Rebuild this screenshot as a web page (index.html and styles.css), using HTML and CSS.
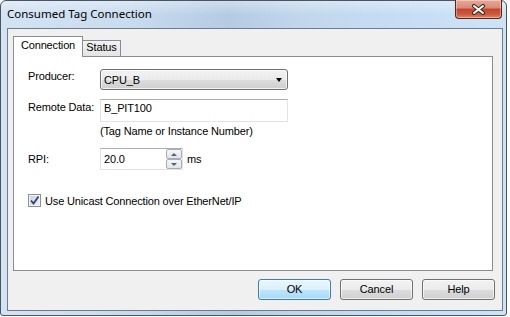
FILE: index.html
```html
<!DOCTYPE html>
<html lang="en">
<head>
    <meta charset="UTF-8">
    <title>Consumed Tag Connection</title>
    <link rel="stylesheet" href="styles.css">
</head>
<body>
    <div class="window">
        <div class="titlebar">
            <span class="title">Consumed Tag Connection</span>
            <div class="close">
                <svg width="15" height="11" viewBox="0 0 15 11">
                    <path d="M3 2 L12 9 M12 2 L3 9" stroke="#3a2420" stroke-width="4" stroke-linecap="round"/>
                    <path d="M3 2 L12 9 M12 2 L3 9" stroke="#ffffff" stroke-width="2" stroke-linecap="round"/>
                </svg>
            </div>
        </div>

        <div class="client">
            <div class="tabs">
                <div class="tab active">Connection</div>
                <div class="tab">Status</div>
            </div>

            <div class="panel">
                <div class="row">
                    <span class="label top">Producer:</span>
                    <div class="combo">
                        <span>CPU_B</span>
                        <span class="arrow"></span>
                    </div>
                </div>

                <div class="row remote">
                    <span class="label top2">Remote Data:</span>
                    <div class="field">B_PIT100</div>
                </div>

                <div class="hint">(Tag Name or Instance Number)</div>

                <div class="row rpi">
                    <span class="label">RPI:</span>
                    <div class="spin">
                        <span class="spin-text">20.0</span>
                        <div class="spin-btns">
                            <span class="spin-btn"><span class="up"></span></span>
                            <span class="spin-btn"><span class="down"></span></span>
                        </div>
                    </div>
                    <span class="unit">ms</span>
                </div>

                <div class="check-row">
                    <span class="checkbox">
                        <svg width="11" height="11" viewBox="0 0 11 11">
                            <path d="M2 5.5 L4.5 8.5 L9.5 1.5" fill="none" stroke="#2e4374" stroke-width="1.8"/>
                        </svg>
                    </span>
                    <span>Use Unicast Connection over EtherNet/IP</span>
                </div>
            </div>

            <div class="buttons">
                <div class="btn default">OK</div>
                <div class="btn">Cancel</div>
                <div class="btn">Help</div>
            </div>
        </div>
    </div>
</body>
</html>
```

FILE: styles.css
```css
* {
    box-sizing: border-box;
}

body {
    margin: 0;
    background: #ffffff;
    font-family: "Liberation Sans", Arial, sans-serif;
    font-size: 11px;
    letter-spacing: -0.15px;
    color: #000;
}

.window {
    width: 507px;
    height: 316px;
    border: 1px solid #4a5563;
    border-radius: 6px 6px 3px 3px;
    padding: 0 3px 4px 6px;
    display: flex;
    flex-direction: column;
    background:
        linear-gradient(to bottom, rgba(255,255,255,0.35) 0, rgba(255,255,255,0) 14px),
        linear-gradient(to right, #d3e3f2 0%, #c9dcef 25%, #b5cbe2 45%, #c2d7ec 60%, #c6ddf3 80%, #cde3f7 100%);
}

.titlebar {
    height: 27px;
    display: flex;
    justify-content: space-between;
    align-items: flex-start;
}

.title {
    font-family: "Noto Sans", "Open Sans", sans-serif;
    font-size: 11.5px;
    letter-spacing: 0;
    line-height: 15px;
    margin-top: 5px;
    color: #000;
}

.close {
    width: 47px;
    height: 19px;
    margin-right: 1px;
    margin-top: -1px;
    border: 1px solid #5a2217;
    border-top: none;
    border-radius: 0 0 4px 4px;
    background: linear-gradient(to bottom, #e8a899 0%, #d88a76 45%, #c4442b 50%, #cc5a3e 80%, #e0876a 100%);
    display: flex;
    align-items: center;
    justify-content: center;
    box-shadow: inset 0 0 0 1px rgba(255,255,255,0.35);
}

.client {
    flex: 1;
    border: 1px solid #6f7c8c;
    background: #f0f0f0;
    padding: 7px 0 0 5px;
}

.tabs {
    display: flex;
    align-items: flex-end;
    height: 20px;
}

.tab {
    border: 1px solid #898c95;
    border-bottom: none;
    text-align: center;
    line-height: 13px;
}

.tab.active {
    width: 70px;
    height: 21px;
    padding-top: 2px;
    background: #ffffff;
    position: relative;
    z-index: 1;
    margin-bottom: -1px;
}

.tab + .tab {
    width: 39px;
    height: 16px;
    margin-left: -1px;
    background: linear-gradient(to bottom, #f2f2f2, #e4e4e4);
}

.panel {
    width: 480px;
    height: 215px;
    border: 1px solid #898c95;
    background: #ffffff;
    padding: 12px 0 0 14px;
}

.row {
    display: flex;
    align-items: center;
}

.label {
    width: 72px;
    line-height: 13px;
}

.label.top {
    align-self: flex-start;
    padding-top: 1px;
}

.label.top2 {
    align-self: flex-start;
    padding-top: 2px;
}

.combo {
    width: 188px;
    height: 21px;
    border: 1px solid #707070;
    border-radius: 3px;
    background: linear-gradient(to bottom, #f2f2f2 0%, #ebebeb 50%, #dddddd 51%, #cfcfcf 100%);
    box-shadow: inset 0 0 0 1px rgba(255,255,255,0.7);
    display: flex;
    align-items: center;
    justify-content: space-between;
    padding: 0 4px 0 3px;
}

.arrow {
    width: 0;
    height: 0;
    border-left: 3.5px solid transparent;
    border-right: 3.5px solid transparent;
    border-top: 4px solid #000;
    margin-right: 1px;
}

.remote {
    margin-top: 9px;
}

.field {
    width: 188px;
    height: 23px;
    border: 1px solid #e2e3ea;
    border-top-color: #abadb3;
    background: #ffffff;
    padding: 2px 0 0 3px;
    line-height: 13px;
}

.hint {
    margin: 3px 0 0 72px;
    line-height: 13px;
}

.rpi {
    margin-top: 10px;
}

.spin {
    width: 83px;
    height: 22px;
    border: 1px solid #e2e3ea;
    border-top-color: #abadb3;
    background: #ffffff;
    display: flex;
    align-items: center;
    padding: 0 0 0 3px;
}

.spin-text {
    flex: 1;
}

.spin-btns {
    display: flex;
    flex-direction: column;
    width: 16px;
    height: 20px;
}

.spin-btn {
    height: 10px;
    border: 1px solid #a8acb3;
    border-radius: 2px;
    background: linear-gradient(to bottom, #f6f6f6, #e2e4e8);
    display: flex;
    align-items: center;
    justify-content: center;
}

.up {
    border-left: 3.5px solid transparent;
    border-right: 3.5px solid transparent;
    border-bottom: 3px solid #4d6185;
}

.down {
    border-left: 3.5px solid transparent;
    border-right: 3.5px solid transparent;
    border-top: 3px solid #4d6185;
}

.unit {
    margin-left: 4px;
}

.check-row {
    display: flex;
    align-items: center;
    margin-top: 24px;
}

.checkbox {
    width: 13px;
    height: 13px;
    border: 1px solid #8e8f8f;
    background: linear-gradient(135deg, #c9d0dc, #eef0f5);
    box-shadow: inset 0 0 0 1px #f4f4f4;
    display: flex;
    align-items: center;
    justify-content: center;
    margin-right: 4px;
}

.buttons {
    display: flex;
    justify-content: flex-end;
    gap: 9px;
    margin-top: 8px;
    padding-right: 7px;
}

.btn {
    width: 73px;
    height: 21px;
    border: 1px solid #707070;
    border-radius: 3px;
    background: linear-gradient(to bottom, #f2f2f2 0%, #ebebeb 50%, #dddddd 51%, #cfcfcf 100%);
    box-shadow: inset 0 0 0 1px rgba(255,255,255,0.7);
    text-align: center;
    line-height: 19px;
}

.btn.default {
    border-color: #3c7fb1;
    background: linear-gradient(to bottom, #eaf6fd 0%, #d9f0fc 50%, #bee6fd 51%, #a7d9f5 100%);
    box-shadow: inset 0 0 0 1px rgba(255,255,255,0.6);
}
```
